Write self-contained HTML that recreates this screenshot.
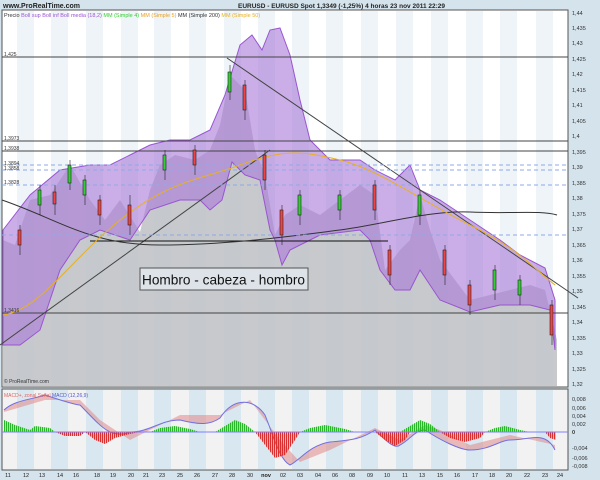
<!DOCTYPE html>
<html><head><meta charset="utf-8"><style>
body{margin:0;width:600px;height:480px;overflow:hidden;background:#d4e3ec;font-family:"Liberation Sans",sans-serif}
svg{display:block}
</style></head><body>
<svg width="600" height="480" viewBox="0 0 600 480" xmlns="http://www.w3.org/2000/svg" font-family="Liberation Sans, sans-serif">
<defs>
<pattern id="pg" width="2" height="4" patternUnits="userSpaceOnUse"><rect width="1.3" height="4" fill="#2bb52b"/></pattern>
<pattern id="pr" width="2" height="4" patternUnits="userSpaceOnUse"><rect width="1.3" height="4" fill="#d83030"/></pattern>
</defs>
<rect width="600" height="480" fill="#d4e3ec"/>
<text x="3" y="8" font-size="7" font-weight="bold" fill="#222">www.ProRealTime.com</text>
<text x="238" y="8" font-size="6.5" font-weight="bold" fill="#222">EURUSD - EURUSD Spot   1,3349 (-1,25%)   4 horas  23 nov 2011 22:29</text>
<rect x="2" y="10" width="566" height="377" fill="#fff" stroke="#555" stroke-width="1"/>
<g fill="#eef4f8">
<rect x="17" y="11" width="17" height="375"/><rect x="51" y="11" width="17" height="375"/><rect x="86" y="11" width="17" height="375"/><rect x="121" y="11" width="17" height="375"/><rect x="154" y="11" width="17" height="375"/><rect x="189" y="11" width="17" height="375"/><rect x="224" y="11" width="17" height="375"/><rect x="258" y="11" width="17" height="375"/><rect x="292" y="11" width="17" height="375"/><rect x="326" y="11" width="17" height="375"/><rect x="361" y="11" width="17" height="375"/><rect x="396" y="11" width="17" height="375"/><rect x="431" y="11" width="17" height="375"/><rect x="466" y="11" width="17" height="375"/><rect x="500" y="11" width="17" height="375"/><rect x="536" y="11" width="17" height="375"/>
</g>
<path d="M3,240 L15,245 L30,200 L50,195 L70,165 L90,200 L105,220 L120,200 L140,232 L150,190 L160,165 L175,155 L195,160 L210,150 L220,125 L230,75 L245,90 L255,150 L265,175 L275,235 L285,215 L300,205 L320,215 L340,200 L360,185 L375,195 L385,270 L400,250 L410,240 L420,195 L430,230 L440,260 L455,280 L470,300 L490,295 L510,290 L530,285 L545,290 L557,340 L557,386 L3,386Z" fill="#bdc0c4" opacity="0.85"/>
<path d="M3,230 L30,195 L60,170 L90,165 L110,165 L130,155 L150,145 L170,140 L190,140 L210,130 L225,95 L240,45 L252,35 L262,50 L270,30 L280,28 L290,55 L300,100 L310,140 L330,160 L360,160 L375,170 L395,180 L410,165 L420,190 L440,200 L470,220 L500,240 L520,255 L545,268 L555,300 L555,350 L550,310 L530,305 L500,305 L470,312 L440,300 L420,270 L410,290 L395,290 L380,270 L370,240 L360,230 L320,235 L290,250 L282,265 L275,240 L270,230 L260,180 L245,175 L232,162 L222,200 L210,210 L200,200 L180,200 L150,210 L130,240 L100,230 L80,240 L60,270 L40,330 L20,345 L3,345Z" fill="#a978d8" fill-opacity="0.6" stroke="#9a55d0" stroke-width="1"/>
<g stroke="#444" stroke-width="1" fill="none">
<line x1="2" y1="57" x2="568" y2="57"/><line x1="2" y1="141" x2="568" y2="141"/><line x1="2" y1="151" x2="568" y2="151"/><line x1="2" y1="313" x2="568" y2="313"/>
<line x1="0" y1="345" x2="270" y2="150"/><line x1="227" y1="58" x2="578" y2="298"/>
<line x1="90" y1="241" x2="388" y2="241" stroke="#111"/>
<path d="M2,200 C60,220 90,245 160,245 S300,235 340,230 S430,210 470,212 S540,210 557,215" stroke="#333"/>
</g>
<g stroke="#8fa8e8" stroke-dasharray="4,3" stroke-width="1"><line x1="2" y1="165" x2="568" y2="165"/><line x1="2" y1="170" x2="568" y2="170"/><line x1="2" y1="185" x2="568" y2="185"/><line x1="2" y1="235" x2="568" y2="235"/></g>
<path d="M3,315 C40,310 70,260 120,220 S200,180 240,165 S300,150 340,160 S420,200 470,225 S530,265 555,285" stroke="#e8b020" fill="none"/>
<g stroke="#222" stroke-width="0.6">
<line x1="20" y1="225" x2="20" y2="255"/><rect x="18" y="230" width="3" height="15" fill="#e44"/>
<line x1="40" y1="185" x2="40" y2="215"/><rect x="38" y="190" width="3" height="15" fill="#3c3"/>
<line x1="55" y1="185" x2="55" y2="215"/><rect x="53" y="192" width="3" height="12" fill="#e44"/>
<line x1="70" y1="160" x2="70" y2="190"/><rect x="68" y="165" width="3" height="18" fill="#3c3"/>
<line x1="85" y1="175" x2="85" y2="205"/><rect x="83" y="180" width="3" height="15" fill="#3c3"/>
<line x1="100" y1="195" x2="100" y2="225"/><rect x="98" y="200" width="3" height="15" fill="#e44"/>
<line x1="130" y1="195" x2="130" y2="235"/><rect x="128" y="205" width="3" height="20" fill="#e44"/>
<line x1="165" y1="150" x2="165" y2="180"/><rect x="163" y="155" width="3" height="15" fill="#3c3"/>
<line x1="195" y1="145" x2="195" y2="175"/><rect x="193" y="150" width="3" height="15" fill="#e44"/>
<line x1="230" y1="65" x2="230" y2="100"/><rect x="228" y="72" width="3" height="20" fill="#3c3"/>
<line x1="245" y1="80" x2="245" y2="120"/><rect x="243" y="85" width="3" height="25" fill="#e44"/>
<line x1="265" y1="150" x2="265" y2="190"/><rect x="263" y="155" width="3" height="25" fill="#e44"/>
<line x1="282" y1="205" x2="282" y2="245"/><rect x="280" y="210" width="3" height="25" fill="#e44"/>
<line x1="300" y1="190" x2="300" y2="225"/><rect x="298" y="195" width="3" height="20" fill="#3c3"/>
<line x1="340" y1="190" x2="340" y2="220"/><rect x="338" y="195" width="3" height="15" fill="#3c3"/>
<line x1="375" y1="180" x2="375" y2="220"/><rect x="373" y="185" width="3" height="25" fill="#e44"/>
<line x1="390" y1="245" x2="390" y2="285"/><rect x="388" y="250" width="3" height="25" fill="#e44"/>
<line x1="420" y1="190" x2="420" y2="225"/><rect x="418" y="195" width="3" height="20" fill="#3c3"/>
<line x1="445" y1="245" x2="445" y2="285"/><rect x="443" y="250" width="3" height="25" fill="#e44"/>
<line x1="470" y1="280" x2="470" y2="315"/><rect x="468" y="285" width="3" height="20" fill="#e44"/>
<line x1="495" y1="265" x2="495" y2="300"/><rect x="493" y="270" width="3" height="20" fill="#3c3"/>
<line x1="520" y1="275" x2="520" y2="305"/><rect x="518" y="280" width="3" height="15" fill="#3c3"/>
<line x1="552" y1="300" x2="552" y2="345"/><rect x="550" y="305" width="3" height="30" fill="#e44"/>
</g>
<rect x="140" y="268" width="168" height="22" fill="#dde3e8" stroke="#555"/>
<text x="142" y="284.5" font-size="14" fill="#111" textLength="163" lengthAdjust="spacingAndGlyphs">Hombro - cabeza - hombro</text>
<text x="4" y="17" font-size="5.5" fill="#333">Precio <tspan fill="#9a55d0">Boll sup Boll inf Boll media (18,2)</tspan> <tspan fill="#3c3">MM (Simple 4)</tspan> <tspan fill="#e8a020">MM (Simple 5)</tspan> MM (Simple 200) <tspan fill="#e8b020">MM (Simple 50)</tspan></text>
<g font-size="5" fill="#333"><text x="4" y="56">1,425</text><text x="4" y="140">1,3973</text><text x="4" y="150">1,3938</text><text x="4" y="165">1,3894</text><text x="4" y="170">1,3858</text><text x="4" y="184">1,3828</text><text x="4" y="312">1,3416</text><text x="4" y="383">© ProRealTime.com</text></g>
<g font-size="5.5" fill="#333">
<text x="572" y="15">1,44</text><text x="572" y="30">1,435</text><text x="572" y="45">1,43</text><text x="572" y="61">1,425</text><text x="572" y="76">1,42</text><text x="572" y="92">1,415</text><text x="572" y="107">1,41</text><text x="572" y="123">1,405</text><text x="572" y="138">1,4</text><text x="572" y="154">1,395</text><text x="572" y="169">1,39</text><text x="572" y="185">1,385</text><text x="572" y="200">1,38</text><text x="572" y="216">1,375</text><text x="572" y="231">1,37</text><text x="572" y="247">1,365</text><text x="572" y="262">1,36</text><text x="572" y="278">1,355</text><text x="572" y="293">1,35</text><text x="572" y="309">1,345</text><text x="572" y="324">1,34</text><text x="572" y="340">1,335</text><text x="572" y="355">1,33</text><text x="572" y="371">1,325</text><text x="572" y="386">1,32</text>
</g>
<rect x="2" y="389" width="566" height="81" fill="#f2f2f2" stroke="#555"/>
<g fill="#d9e8f0"><rect x="17" y="390" width="17" height="79"/><rect x="51" y="390" width="17" height="79"/><rect x="86" y="390" width="17" height="79"/><rect x="121" y="390" width="17" height="79"/><rect x="154" y="390" width="17" height="79"/><rect x="189" y="390" width="17" height="79"/><rect x="224" y="390" width="17" height="79"/><rect x="258" y="390" width="17" height="79"/><rect x="292" y="390" width="17" height="79"/><rect x="326" y="390" width="17" height="79"/><rect x="361" y="390" width="17" height="79"/><rect x="396" y="390" width="17" height="79"/><rect x="431" y="390" width="17" height="79"/><rect x="466" y="390" width="17" height="79"/><rect x="500" y="390" width="17" height="79"/><rect x="536" y="390" width="17" height="79"/></g>
<path d="M4,410 C15,400 30,400 45,395 C60,400 75,405 80,405 C100,425 110,440 130,432 C150,432 160,420 180,420 C200,425 210,425 220,418 C235,395 255,400 265,415 C275,440 280,460 290,465 C300,460 310,445 330,442 C350,440 360,440 375,430 C385,440 395,450 400,445 C410,440 415,430 425,430 C440,440 460,450 470,450 C490,450 500,440 510,440 C530,440 545,430 555,450 L555,445 L510,435 L470,445 L440,430 L425,425 L400,440 L375,428 L330,450 L300,462 L280,440 L265,420 L250,400 L220,415 L180,415 L130,440 L100,420 L80,400 L45,400 L4,412Z" fill="#e08080" opacity="0.5"/>
<path d="M4,410 C15,400 30,400 45,395 C60,400 75,405 80,405 C100,425 110,440 130,432 C150,432 160,420 180,420 C200,425 210,425 220,418 C235,395 255,400 265,415 C275,440 280,460 290,465 C300,460 310,445 330,442 C350,440 360,440 375,430 C385,440 395,450 400,445 C410,440 415,430 425,430 C440,440 460,450 470,450 C490,450 500,440 510,440 C530,440 545,430 555,450" stroke="#7070e0" fill="none"/>
<path d="M4,432 L4,420 L15,425 L30,430 L35,426 L50,428 L55,432Z M150,432 L160,428 L175,426 L190,429 L200,432Z M215,432 L225,426 L235,420 L245,424 L255,432Z M300,432 L310,428 L325,425 L345,429 L355,432Z M400,432 L410,426 L420,420 L430,424 L440,432Z M485,432 L495,428 L505,426 L520,430 L530,432Z" fill="url(#pg)"/>
<path d="M55,432 L65,436 L80,436 L85,432Z M85,432 L95,440 L105,444 L115,438 L130,434 L140,432Z M255,432 L265,445 L275,458 L285,455 L295,440 L300,432Z M375,432 L385,440 L395,446 L405,440 L410,432Z M440,432 L450,438 L465,442 L480,438 L485,432Z M545,432 L550,438 L556,440 L556,432Z" fill="url(#pr)"/>
<line x1="2" y1="432" x2="568" y2="432" stroke="#8080ff"/>
<text x="4" y="397" font-size="5" fill="#d66">MACD+, zonal Señal <tspan fill="#55c">MACD (12,26,9)</tspan></text>
<g font-size="5.5" fill="#333"><text x="572" y="401">0,008</text><text x="572" y="410">0,006</text><text x="572" y="418">0,004</text><text x="572" y="426">0,002</text><text x="572" y="434" font-weight="bold">0</text><text x="572" y="450">-0,004</text><text x="572" y="460">-0,006</text><text x="572" y="468">-0,008</text></g>
<g font-size="5.5" fill="#222" text-anchor="middle">
<text x="8" y="477">11</text><text x="26" y="477">12</text><text x="42" y="477">13</text><text x="60" y="477">14</text><text x="76" y="477">16</text><text x="97" y="477">18</text><text x="113" y="477">19</text><text x="131" y="477">20</text><text x="146" y="477">21</text><text x="162" y="477">23</text><text x="180" y="477">25</text><text x="197" y="477">26</text><text x="215" y="477">27</text><text x="232" y="477">28</text><text x="250" y="477">30</text><text x="266" y="477" font-weight="bold">nov</text><text x="283" y="477">02</text><text x="300" y="477">03</text><text x="318" y="477">04</text><text x="335" y="477">06</text><text x="352" y="477">08</text><text x="370" y="477">09</text><text x="387" y="477">10</text><text x="405" y="477">11</text><text x="422" y="477">13</text><text x="440" y="477">15</text><text x="457" y="477">16</text><text x="475" y="477">17</text><text x="492" y="477">18</text><text x="509" y="477">20</text><text x="527" y="477">22</text><text x="545" y="477">23</text><text x="560" y="477">24</text>
</g>
</svg>
</body></html>
